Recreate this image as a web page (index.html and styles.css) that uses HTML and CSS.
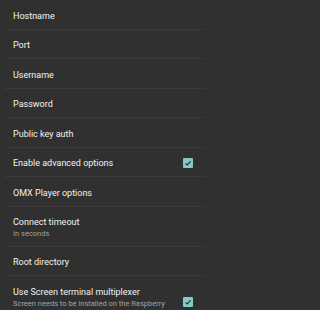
FILE: index.html
```html
<!DOCTYPE html>
<html>
<head>
<meta charset="utf-8">
<link rel="stylesheet" href="styles.css">
</head>
<body>
<div class="list">
  <div class="row"><div class="text"><div class="title">Hostname</div></div></div>
  <div class="row"><div class="text"><div class="title">Port</div></div></div>
  <div class="row"><div class="text"><div class="title">Username</div></div></div>
  <div class="row"><div class="text"><div class="title">Password</div></div></div>
  <div class="row"><div class="text"><div class="title">Public key auth</div></div></div>
  <div class="row"><div class="text"><div class="title">Enable advanced options</div></div>
    <div class="check"><svg viewBox="0 0 10 10" width="10" height="10"><polyline points="2.6,5.4 4.3,7 7.6,3.4" fill="none" stroke="#2e2e2e" stroke-width="1.2"/></svg></div>
  </div>
  <div class="row"><div class="text"><div class="title">OMX Player options</div></div></div>
  <div class="row"><div class="text"><div class="title">Connect timeout</div><div class="sub">In seconds</div></div></div>
  <div class="row"><div class="text"><div class="title">Root directory</div></div></div>
  <div class="row"><div class="text"><div class="title">Use Screen terminal multiplexer</div><div class="sub">Screen needs to be installed on the Raspberry Pi to support this.</div></div>
    <div class="check"><svg viewBox="0 0 10 10" width="10" height="10"><polyline points="2.6,5.4 4.3,7 7.6,3.4" fill="none" stroke="#2e2e2e" stroke-width="1.2"/></svg></div>
  </div>
</div>
</body>
</html>
```

FILE: styles.css
```css
html, body {
  margin: 0;
  padding: 0;
  background: #303030;
  height: 100%;
  overflow: hidden;
}
body {
  font-family: Roboto, "Noto Sans", sans-serif;
  width: 210px;
}
.list {
  display: flex;
  flex-direction: column;
  padding: 0 4px;
}
.row {
  display: flex;
  align-items: center;
  padding: 9.5px 13px 7px 9px;
  border-bottom: 1px solid #3a3a3a;
}
.text {
  flex: 1;
  display: flex;
  flex-direction: column;
  gap: 1px;
  padding-right: 12px;
}
.title {
  font-size: 9px;
  line-height: 12px;
  color: #f2f2f2;
}
.sub {
  font-size: 7.5px;
  line-height: 9.5px;
  color: #a2a2a2;
}
.check {
  width: 10px;
  height: 10px;
  background: #80cbc4;
  border-radius: 1px;
  display: flex;
  flex-shrink: 0;
}
```
